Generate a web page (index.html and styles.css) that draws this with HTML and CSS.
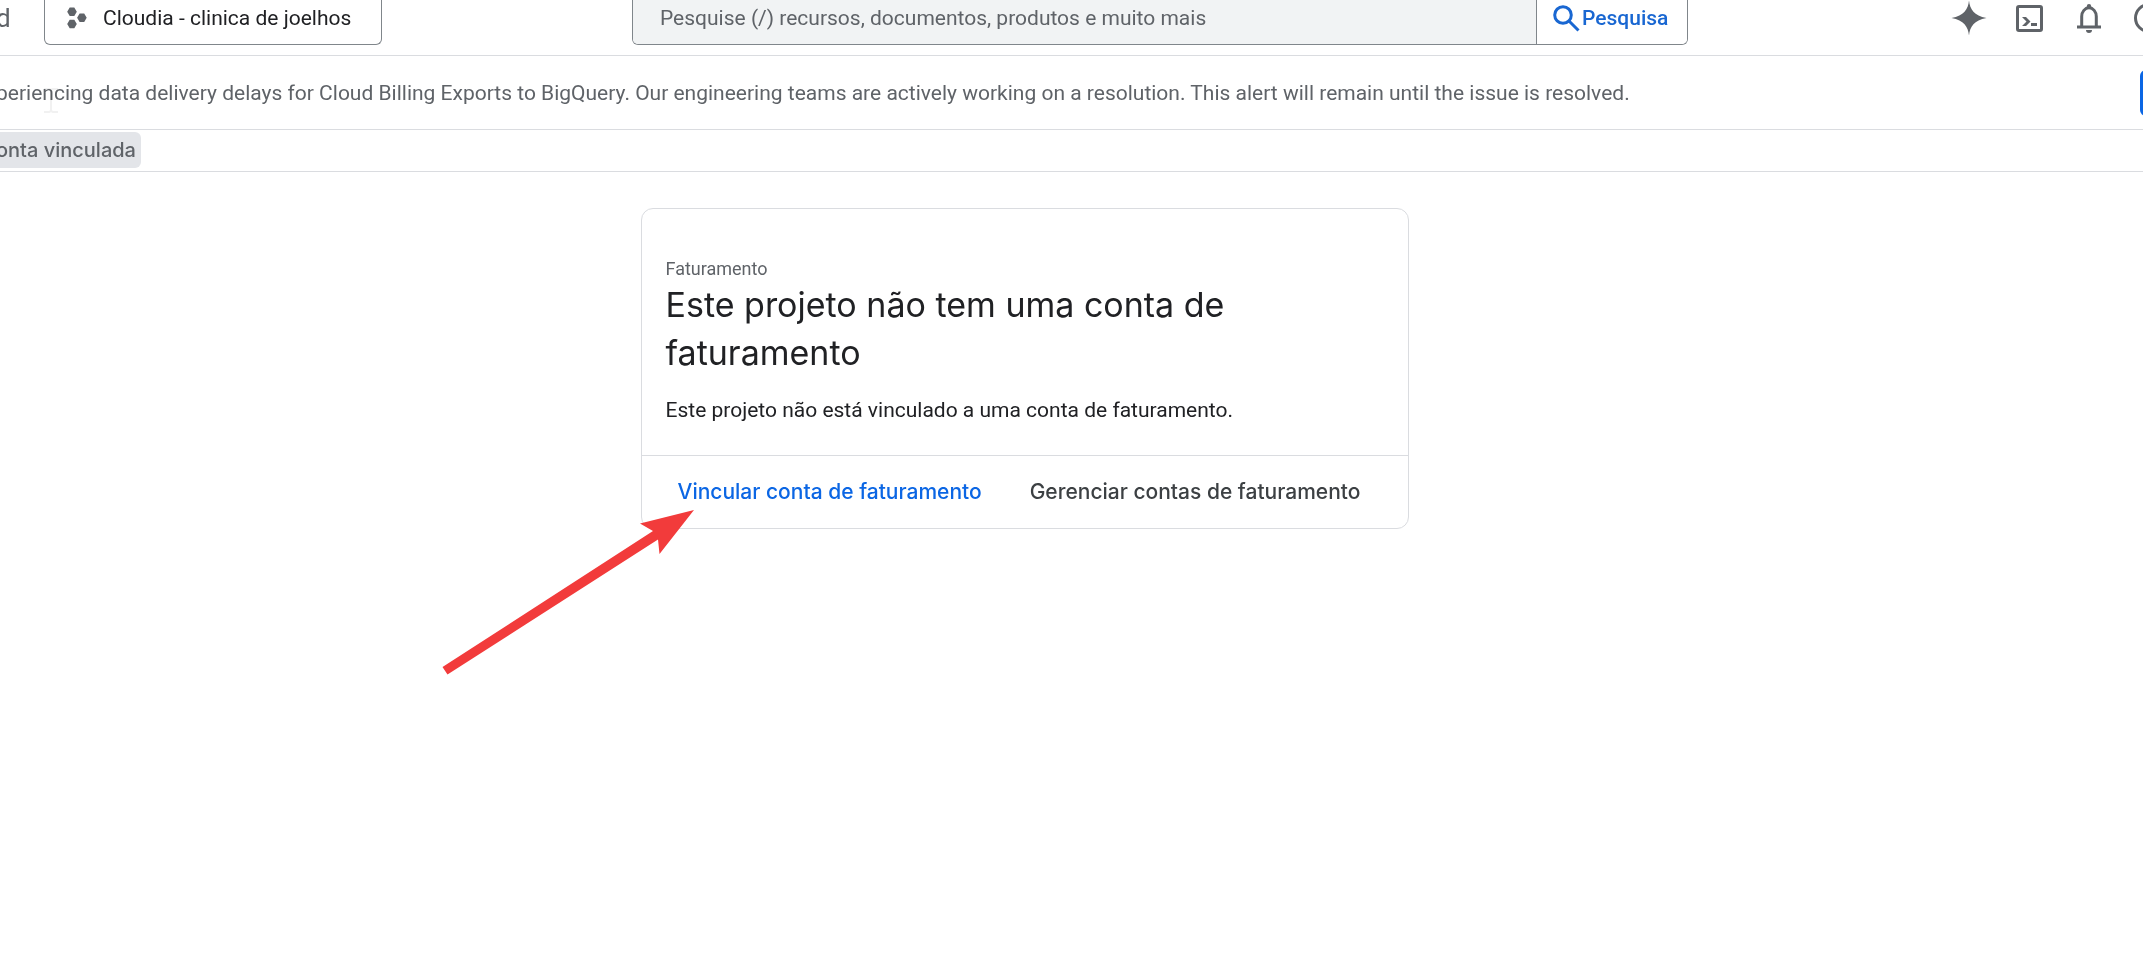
FILE: index.html
```html
<!DOCTYPE html>
<html lang="pt-BR">
<head>
<meta charset="utf-8">
<title>Faturamento</title>
<link rel="stylesheet" href="styles.css">
</head>
<body>
<div class="page">
  <header class="topbar">
    <span class="brand">d</span>
    <button class="project" type="button">
      <svg class="project-icon" viewBox="0 0 20 22" aria-hidden="true">
        <path d="M2.700 0.500h4.600l2.500 4.300-2.500 4.300H2.700L.2 4.800zM2.700 12.700h4.600l2.500 4.300-2.500 4.300H2.700L.2 17zM12.600 6.500h4.600l2.500 4.300-2.500 4.300h-4.600l-2.500-4.300z"/>
      </svg>
      Cloudia - clinica de joelhos
    </button>
    <form class="search">
      <input class="search-input" type="text" aria-label="Pesquise" placeholder="Pesquise (/) recursos, documentos, produtos e muito mais">
      <button class="search-button" type="button">
        <svg class="search-icon" viewBox="0 0 27 27" aria-hidden="true"><circle cx="10" cy="10" r="8.300"/><path d="M16 16l9.500 9.500"/></svg>
        Pesquisa
      </button>
    </form>
    <nav class="tools">
      <button class="tool" type="button" aria-label="Gemini">
        <svg viewBox="0 0 36 36"><path class="fill" d="M18 .5c1 9 5 15 17.500 17.500C23 20.500 19 26.500 18 35.500 17 26.500 13 20.500.5 18 13 15.500 17 9.500 18 .5z"/></svg>
      </button>
      <button class="tool" type="button" aria-label="Cloud Shell">
        <svg viewBox="0 0 36 36"><rect class="line" x="6.500" y="6.500" width="24" height="24" rx="1.500"/><path class="fill" d="M11 17h4l4.500 4.500-4.500 4.500h-4l4.500-4.500zM20 23h6v3h-6z"/></svg>
      </button>
      <button class="tool" type="button" aria-label="Notificações">
        <svg viewBox="0 0 36 36"><path class="line" d="M10.700 27v-10.500a7.300 8.700 0 0 1 14.600 0V27"/><path class="fill" d="M6 25.500h24v3H6zM15 30h6a3 3 0 0 1-6 0z"/><circle class="fill" cx="18" cy="6.200" r="2.200"/></svg>
      </button>
      <button class="tool" type="button" aria-label="Ajuda">
        <svg viewBox="0 0 36 36"><circle class="line" cx="18" cy="18" r="13.500"/></svg>
      </button>
    </nav>
  </header>

  <section class="alert">
    <p class="alert-text">periencing data delivery delays for Cloud Billing Exports to BigQuery. Our engineering teams are actively working on a resolution. This alert will remain until the issue is resolved.</p>
    <button class="alert-button" type="button" aria-label="Dispensar"></button>
    <svg class="pointer" viewBox="0 0 14 25" aria-hidden="true"><path d="M0 1h5l2 1 2-1h5M7 2v21M0 24h5l2-1 2 1h5"/></svg>
  </section>

  <nav class="crumbs"><span class="chip">onta vinculada</span></nav>

  <main class="content">
    <article class="card">
      <div class="card-body">
        <p class="eyebrow">Faturamento</p>
        <h1 class="title">Este projeto não tem uma conta de faturamento</h1>
        <p class="text">Este projeto não está vinculado a uma conta de faturamento.</p>
      </div>
      <footer class="actions">
        <a class="action primary" href="#">Vincular conta de faturamento</a>
        <a class="action" href="#">Gerenciar contas de faturamento</a>
      </footer>
      <svg class="arrow" viewBox="0 0 260 180" aria-hidden="true"><path d="M254 2l-54 13.500 13 7.500L2.500 159l5 7.500L218 31.500l1.500 14.500z"/></svg>
    </article>
  </main>
</div>
</body>
</html>
```
FILE: styles.css
```css
* { box-sizing: border-box; }

body {
  margin: 0;
  background: #fff;
  color: #202124;
  font: 21px/28px Roboto, sans-serif;
  overflow-x: hidden;
}

p, h1 { margin: 0; }

button, input { font: inherit; }

button { cursor: pointer; }

.page {
  min-height: 100vh;
  margin-left: -4px;
  overflow: hidden;
}

.topbar {
  display: flex;
  align-items: flex-start;
  height: 56px;
  border-bottom: 1px solid #dadce0;
}

.brand {
  width: 48px;
  padding-top: 4px;
  color: #5f6368;
  font-size: 26px;
}

.project {
  display: flex;
  align-items: center;
  width: 338px;
  height: 45px;
  padding: 0 22px 8px;
  gap: 16px;
  border: 1px solid #80868b;
  border-top: 0;
  border-radius: 0 0 6px 6px;
  background: #fff;
  color: #202124;
  white-space: nowrap;
}

.project-icon {
  flex: none;
  width: 20px;
  height: 22px;
  fill: #5f6368;
}

.search {
  display: flex;
  width: 1056px;
  height: 45px;
  margin-left: 250px;
  border: 1px solid #80868b;
  border-top: 0;
  border-radius: 0 0 6px 6px;
  overflow: hidden;
}

.search-input {
  flex: 1;
  padding: 0 27px 8px;
  border: 0;
  background: #f1f3f4;
  color: #5f6368;
}

.search-input::placeholder { color: #5f6368; opacity: 1; }

.search-button {
  display: flex;
  align-items: center;
  width: 151px;
  padding: 0 16px 8px;
  gap: 2px;
  border: 0;
  border-left: 1px solid #80868b;
  background: #fff;
  color: #1967d2;
  font-weight: 500;
}

.search-icon {
  flex: none;
  width: 27px;
  height: 27px;
  fill: none;
  stroke: #1967d2;
  stroke-width: 3;
}

.tools {
  display: flex;
  gap: 24px;
  margin-left: auto;
  margin-right: -24px;
}

.tool {
  width: 36px;
  height: 36px;
  padding: 0;
  border: 0;
  background: none;
}

.tool svg { display: block; }
.tool .fill { fill: #5f6368; }
.tool .line { fill: none; stroke: #5f6368; stroke-width: 3; }

.alert {
  position: relative;
  display: flex;
  align-items: center;
  height: 74px;
  border-bottom: 1px solid #dadce0;
}

.alert-text {
  flex: 1;
  color: #5f6368;
  white-space: nowrap;
}

.alert-button {
  width: 96px;
  height: 46px;
  margin-right: -93px;
  border: 0;
  border-radius: 6px;
  background: #0b66e4;
}

.pointer {
  position: absolute;
  left: 48px;
  top: 32px;
  width: 14px;
  height: 25px;
  fill: none;
  stroke: #f1f1f1;
  stroke-width: 2;
  mix-blend-mode: multiply;
}

.crumbs {
  display: flex;
  align-items: center;
  height: 42px;
  padding-bottom: 2px;
  border-bottom: 1px solid #dadce0;
}

.chip {
  padding: 4px 5px 4px 0;
  border-radius: 0 6px 6px 0;
  background: #e3e5e9;
  color: #5f6368;
  font: 500 20px/28px Inter, sans-serif;
}

.content {
  display: flex;
  justify-content: center;
  padding: 36px 90px 40px 0;
}

.card {
  position: relative;
  width: 768px;
  border: 1px solid #dadce0;
  border-radius: 12px;
}

.card-body { padding: 48px 24px 31px; }

.eyebrow {
  color: #5f6368;
  font-size: 18px;
  line-height: 24px;
}

.title {
  font: 400 34px/48px Inter, sans-serif;
}

.text { margin-top: 19px; }

.actions {
  display: flex;
  gap: 48px;
  padding: 22px 36px;
  border-top: 1px solid #dadce0;
}

.action {
  color: #3c4043;
  font: 500 21px/28px Inter, sans-serif;
  text-decoration: none;
  white-space: nowrap;
}

.primary { color: #0b66e4; }

.arrow {
  position: absolute;
  left: -202px;
  top: 299px;
  width: 260px;
  height: 180px;
  fill: #f23b3b;
  pointer-events: none;
}
```
